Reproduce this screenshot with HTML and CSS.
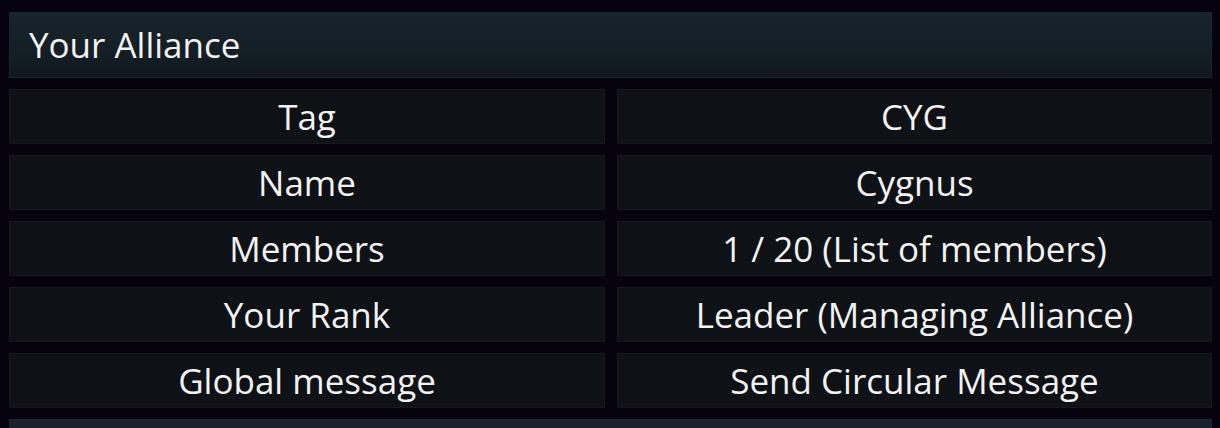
FILE: index.html
```html
<!DOCTYPE html>
<html>
<head lang="en">
    <meta charset="UTF-8">
    <title>Your Alliance</title>
    <link rel="stylesheet" href="styles.css">
</head>
<body>
    <div id="page">
        <div class="panelTitle">Your Alliance</div>
        <div class="infoGrid">
            <div class="cell">Tag</div>
            <div class="cell">CYG</div>
            <div class="cell">Name</div>
            <div class="cell">Cygnus</div>
            <div class="cell">Members</div>
            <div class="cell">1 / 20 (List of members)</div>
            <div class="cell">Your Rank</div>
            <div class="cell">Leader (Managing Alliance)</div>
            <div class="cell">Global message</div>
            <div class="cell">Send Circular Message</div>
        </div>
        <div class="panelTitle next"></div>
    </div>
</body>
</html>
```

FILE: styles.css
```css
* {
    margin:0;
    padding:0;
    box-sizing: border-box;
}
html, body {
    height:100%;
    overflow:hidden;
}
body {
    background-color: #07030e;
    font-family: "Open Sans", "Noto Sans", sans-serif;
    color: #f2f2f2;
}
#page {
    padding: 12px 8px 0 9px;
}
.panelTitle {
    height:66px;
    line-height:64px;
    padding-left:19px;
    font-size:35px;
    background: linear-gradient(#18232b, #141e25 60%, #10181d);
    border: 1px solid #1a252c;
}
.panelTitle.next {
    margin-top:11px;
}
.infoGrid {
    display:grid;
    grid-template-columns: 596px 1fr;
    gap: 11px 12px;
    margin-top:11px;
}
.cell {
    height:55px;
    display:flex;
    align-items:center;
    justify-content:center;
    font-size:35px;
    background-color: #0e1115;
    border: 1px solid #15191e;
}
```
